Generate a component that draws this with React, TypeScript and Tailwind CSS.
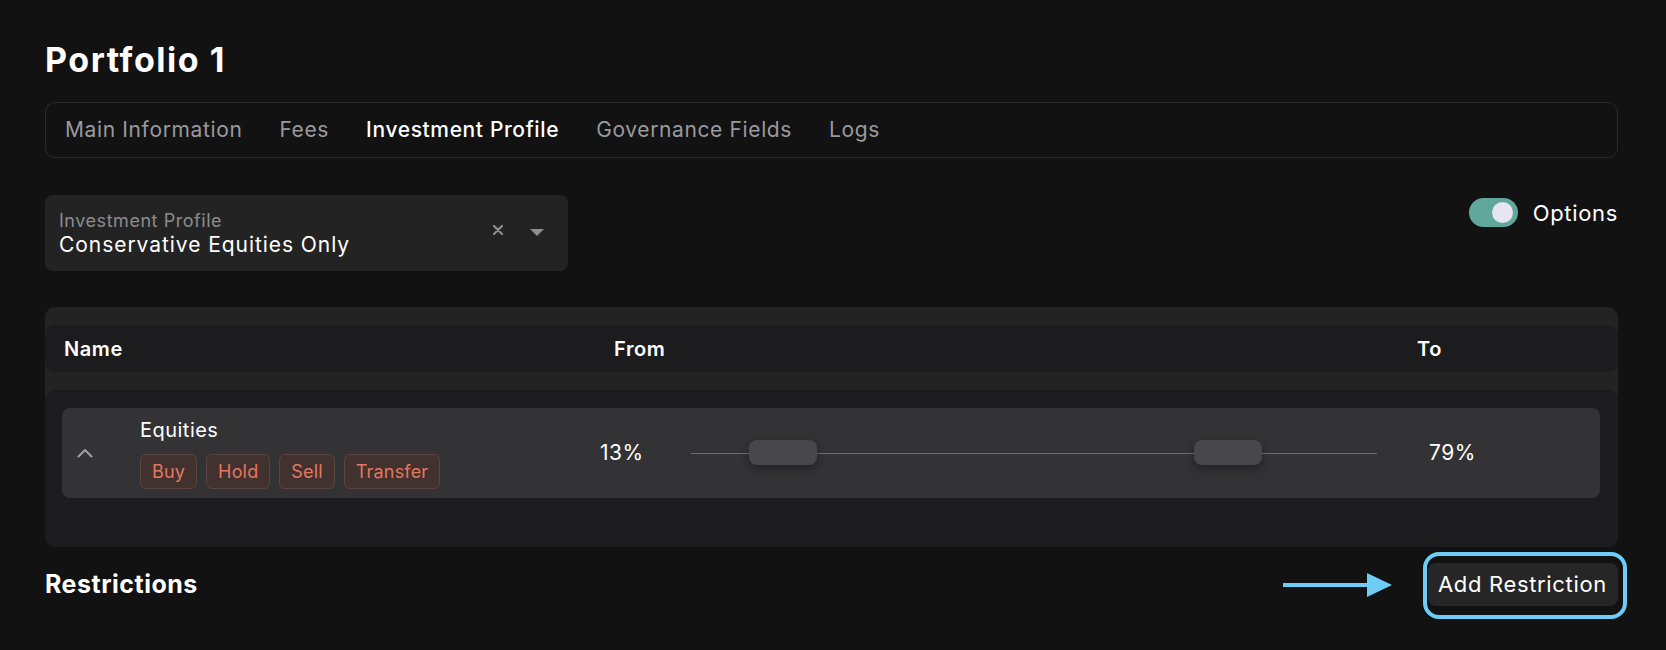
import React from 'react';

const tabs = ['Main Information', 'Fees', 'Investment Profile', 'Governance Fields', 'Logs'];
const actions = ['Buy', 'Hold', 'Sell', 'Transfer'];

function Toggle() {
  return (
    <div className="flex items-center gap-[15px]">
      <div className="w-[49px] h-[29px] rounded-full bg-[#5fa89b] flex items-center justify-end pr-[5px]">
        <div className="w-[21px] h-[21px] rounded-full bg-[#e6e6f2]" />
      </div>
      <span className="text-[22px] leading-[26px] tracking-[0.03em] text-white">Options</span>
    </div>
  );
}

function ProfileSelect() {
  return (
    <div className="w-[523px] h-[76px] rounded-[8px] bg-[#232323] flex items-center pl-[14px] pr-[24px]">
      <div className="flex-1 flex flex-col gap-[1px]">
        <span className="text-[18px] leading-[21px] tracking-[0.03em] text-[#8c8c8e]">Investment Profile</span>
        <span className="text-[21px] leading-[25px] tracking-[0.045em] text-white">Conservative Equities Only</span>
      </div>
      <svg width="10" height="10" viewBox="0 0 10 10" className="mr-[27px] mt-[-6px]">
        <path d="M1 1 L9 9 M9 1 L1 9" stroke="#8e8e90" strokeWidth="2.2" strokeLinecap="round" />
      </svg>
      <svg width="14" height="8" viewBox="0 0 14 8" className="mt-[-1px]">
        <path d="M0 0 H14 L7 7 Z" fill="#8e8e90" />
      </svg>
    </div>
  );
}

function RangeSlider({ from, to }: { from: number; to: number }) {
  return (
    <div className="relative w-[686px] h-[26px] flex items-center">
      <div className="w-full h-px bg-[#6e6e72]" />
      <div
        className="absolute top-0 w-[68px] h-[25px] rounded-[8px] bg-[#48474c] shadow-[0_4px_10px_rgba(0,0,0,0.35)]"
        style={{ left: `${from}px` }}
      />
      <div
        className="absolute top-0 w-[68px] h-[25px] rounded-[8px] bg-[#48474c] shadow-[0_4px_10px_rgba(0,0,0,0.35)]"
        style={{ left: `${to}px` }}
      />
    </div>
  );
}

function RestrictionRow() {
  return (
    <div className="h-[90px] rounded-[8px] bg-[#333335] flex items-center tracking-[0.03em]">
      <div className="w-[78px] pl-[15px] flex items-center">
        <svg width="16" height="10" viewBox="0 0 16 10">
          <path d="M1.5 8.5 L8 2 L14.5 8.5" fill="none" stroke="#a2a2a4" strokeWidth="2" strokeLinecap="round" strokeLinejoin="round" />
        </svg>
      </div>
      <div className="w-[460px] flex flex-col gap-[12px]">
        <span className="text-[20px] leading-[24px] text-white">Equities</span>
        <div className="flex gap-[9px]">
          {actions.map((a) => (
            <span
              key={a}
              className="h-[35px] px-[11px] flex items-center rounded-[6px] border border-[#5c433e] bg-[#413230] text-[18px] tracking-[0.01em] text-[#e6765f]"
            >
              {a}
            </span>
          ))}
        </div>
      </div>
      <div className="w-[91px] text-[21px] text-white">13%</div>
      <RangeSlider from={58} to={503} />
      <div className="pl-[52px] text-[21px] text-white">79%</div>
    </div>
  );
}

export default function App() {
  return (
    <div className="min-h-screen bg-[#121212] text-white pl-[45px] pr-[48px] pt-[40px] font-['Inter',sans-serif]">
      <h1 className="text-[34px] leading-[40px] font-bold tracking-[0.045em]">Portfolio 1</h1>

      <nav className="mt-[22px] h-[56px] rounded-[10px] border border-[#2a2a2c] flex items-center pl-[19px] gap-[37px] text-[21px] tracking-[0.03em]">
        {tabs.map((t) => (
          <span
            key={t}
            className={t === 'Investment Profile' ? 'text-white font-medium' : 'text-[#9a9a9e]'}
          >
            {t}
          </span>
        ))}
      </nav>

      <div className="mt-[37px] flex justify-between items-start">
        <ProfileSelect />
        <div className="pt-[3px]">
          <Toggle />
        </div>
      </div>

      <div className="mt-[36px] rounded-[10px] bg-[#232323] pt-[18px]">
        <div className="h-[47px] rounded-[10px] bg-[#1c1c1e] grid grid-cols-[550px_803px_1fr] items-center pl-[19px] text-[20px] font-semibold tracking-[0.03em]">
          <span>Name</span>
          <span>From</span>
          <span>To</span>
        </div>
        <div className="mt-[18px] rounded-[10px] bg-[#1c1c1e] pt-[18px] pb-[49px] pl-[17px] pr-[18px]">
          <RestrictionRow />
        </div>
      </div>

      <div className="mt-[16px] flex items-center justify-between">
        <h2 className="text-[25px] font-bold tracking-[0.02em]">Restrictions</h2>
        <div className="flex items-center gap-[36px]">
          <svg width="109" height="26" viewBox="0 0 109 26">
            <path d="M0 13 H86" stroke="#6dcdf6" strokeWidth="4" />
            <path d="M84 1 L109 13 L84 25 Z" fill="#6dcdf6" />
          </svg>
          <div className="relative">
            <span className="absolute -left-[5px] -right-[9px] -top-[11px] -bottom-[13px] rounded-[16px] border-4 border-[#6dcdf6]" />
            <button className="relative h-[43px] w-[190px] rounded-[8px] bg-[#262626] text-[22px] tracking-[0.03em] text-white text-left pl-[10px]">
              Add Restriction
            </button>
          </div>
        </div>
      </div>
    </div>
  );
}
